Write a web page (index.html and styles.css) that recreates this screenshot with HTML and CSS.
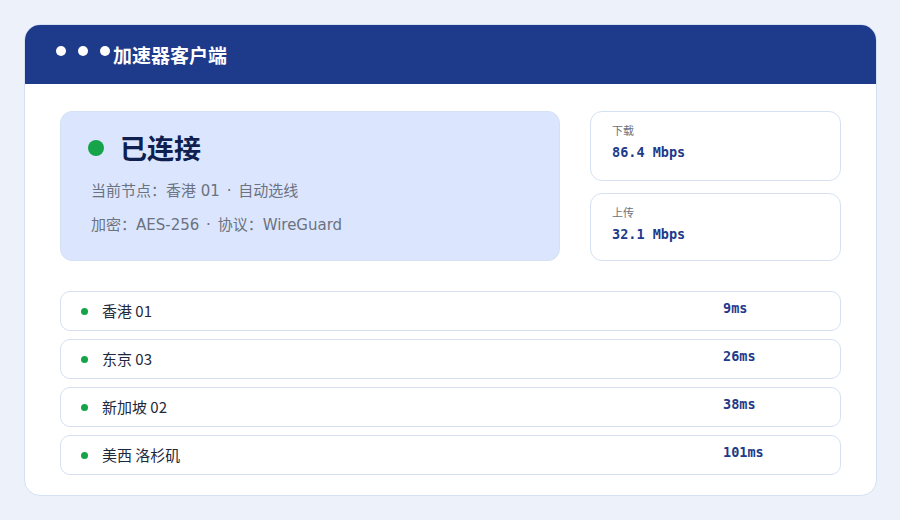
FILE: index.html
```html
<!DOCTYPE html>
<html lang="zh-CN">
<head>
    <meta charset="UTF-8">
    <meta name="viewport" content="width=device-width, initial-scale=1.0">
    <title>加速器客户端</title>
    <link rel="stylesheet" href="styles.css">
</head>
<body>
    <div class="window">
        <div class="titlebar">
            <div class="dots">
                <span></span><span></span><span></span>
            </div>
            <h1>加速器客户端</h1>
        </div>

        <div class="content">
            <div class="top">
                <div class="status">
                    <div class="status-head">
                        <span class="big-dot"></span>
                        <h2>已连接</h2>
                    </div>
                    <p>当前节点：香港 01 <span class="sep">·</span> 自动选线</p>
                    <p>加密：AES-256 <span class="sep">·</span> 协议：WireGuard</p>
                </div>

                <div class="stats">
                    <div class="stat">
                        <div class="stat-label">下载</div>
                        <div class="stat-value">86.4 Mbps</div>
                    </div>
                    <div class="stat">
                        <div class="stat-label">上传</div>
                        <div class="stat-value">32.1 Mbps</div>
                    </div>
                </div>
            </div>

            <ul class="servers">
                <li><span class="dot"></span><span class="name">香港 01</span><span class="ping">9ms</span></li>
                <li><span class="dot"></span><span class="name">东京 03</span><span class="ping">26ms</span></li>
                <li><span class="dot"></span><span class="name">新加坡 02</span><span class="ping">38ms</span></li>
                <li><span class="dot"></span><span class="name">美西 洛杉矶</span><span class="ping">101ms</span></li>
            </ul>
        </div>
    </div>
</body>
</html>
```

FILE: styles.css
```css
body {
    margin: 0;
    padding: 24px;
    background-color: #edf2fa;
    font-family: "Noto Sans CJK SC", "Noto Sans", sans-serif;
}

.window {
    width: 853px;
    height: 472px;
    background-color: white;
    border: 1px solid #d5e0f2;
    border-radius: 16px;
    overflow: hidden;
    box-sizing: border-box;
}

.titlebar {
    height: 59px;
    background-color: #1e3a8a;
    display: flex;
    align-items: center;
    padding-left: 31px;
}

.dots {
    display: flex;
    gap: 12px;
    margin-bottom: 8px;
}

.dots span {
    width: 10px;
    height: 10px;
    border-radius: 50%;
    background-color: white;
}

.titlebar h1 {
    margin: 0 0 0 3px;
    color: white;
    font-size: 19px;
    font-weight: 700;
}

.content {
    padding: 27px 35px 0 35px;
}

.top {
    display: flex;
    gap: 30px;
    height: 150px;
}

.status {
    width: 500px;
    background-color: #dbe6fe;
    border: 1px solid #d5e0f2;
    border-radius: 12px;
    box-sizing: border-box;
    padding: 17px 30px;
}

.status-head {
    display: flex;
    align-items: center;
    gap: 16px;
    margin-bottom: 7px;
    margin-left: -3px;
}

.big-dot {
    width: 16px;
    height: 16px;
    border-radius: 50%;
    background-color: #16a34a;
}

.status h2 {
    margin: 0;
    font-size: 27px;
    line-height: 38px;
    font-weight: 700;
    color: #0f1f4f;
}

.status p {
    margin: 0;
    font-family: "DejaVu Sans", "Noto Sans CJK SC", sans-serif;
    font-size: 15px;
    line-height: 34px;
    color: #6b7280;
}

.sep {
    margin: 0 2px;
}

.stats {
    flex: 1;
    display: flex;
    flex-direction: column;
    gap: 12px;
}

.stat {
    border: 1px solid #d5e0f2;
    border-radius: 12px;
    box-sizing: border-box;
    padding: 10px 21px;
}

.stat:first-child {
    height: 70px;
}

.stat:last-child {
    flex: 1;
}

.stat-label {
    font-size: 11px;
    line-height: 16px;
    color: #6b7280;
}

.stat-value {
    font-family: "DejaVu Sans Mono", monospace;
    font-weight: 700;
    font-size: 13.5px;
    line-height: 20px;
    margin-top: 4px;
    color: #1e3a8a;
}

.servers {
    list-style: none;
    margin: 30px 0 0 0;
    padding: 0;
    display: flex;
    flex-direction: column;
    gap: 8px;
}

.servers li {
    height: 40px;
    border: 1px solid #d5e0f2;
    border-radius: 10px;
    box-sizing: border-box;
    display: grid;
    grid-template-columns: 21px 1fr 117px;
    align-items: center;
    padding-left: 20px;
}

.dot {
    width: 7px;
    height: 7px;
    border-radius: 50%;
    background-color: #16a34a;
}

.name {
    font-size: 15px;
    line-height: 20px;
    color: #1e293b;
}

.ping {
    font-family: "DejaVu Sans Mono", monospace;
    font-weight: 700;
    font-size: 13.5px;
    color: #1e3a8a;
    margin-bottom: 6px;
}
```
